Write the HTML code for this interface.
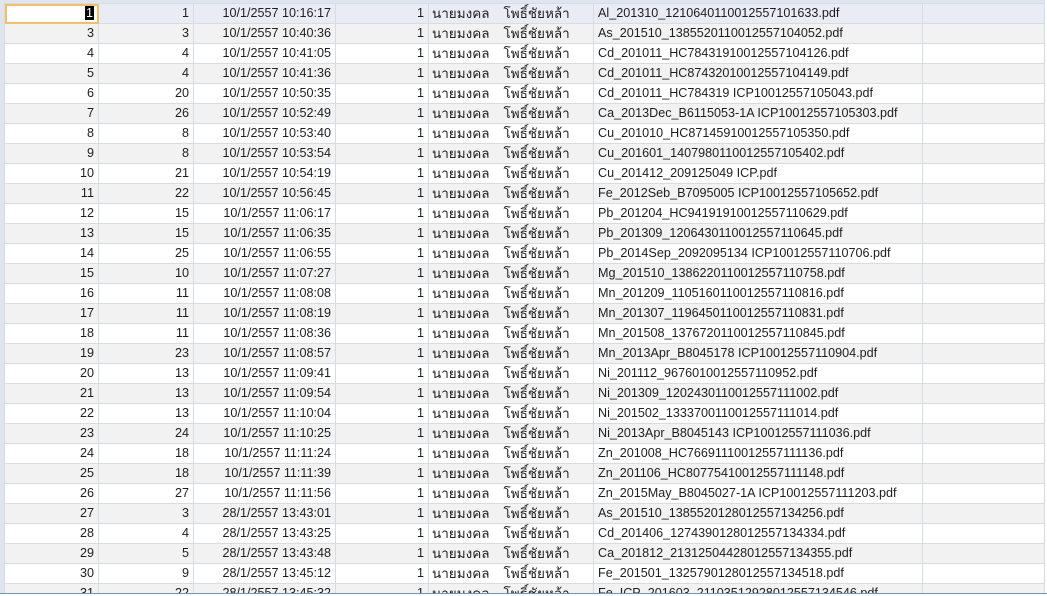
<!DOCTYPE html>
<html><head><meta charset="utf-8"><style>
html,body{margin:0;padding:0;background:#fff;width:1047px;height:596px;overflow:hidden}
.wrap{position:absolute;left:0;top:0;width:1047px;height:593px;background:#fff;overflow:hidden}
.top{position:absolute;left:0;top:0;width:1047px;height:3px;background:#dfe5ef}
.lft{position:absolute;left:0;top:0;width:4px;height:593px;background:#dfe5ef}
.bot{position:absolute;left:0;top:593px;width:1047px;height:1px;background:#6f93c8}
.rgt{position:absolute;left:1045px;top:0;width:2px;height:593px;background:#fff}
table{position:absolute;left:4px;top:3px;border-collapse:collapse;table-layout:fixed;font-family:"Liberation Sans","Noto Sans CJK SC",sans-serif;font-size:12.6px;color:#1e1e1e}
td{height:19px;padding:0 4px;border:1px solid #d5dce8;white-space:nowrap;overflow:hidden;line-height:19px}
td.r{text-align:right}
td.n{border-right:none;padding-left:3px;font-size:13.5px}
td.s{border-left:none;padding-left:3px;font-size:13.5px}
tr:nth-child(even) td{background:#f2f2f2}
tr.sel td{background:#e9ecf4}
tr.sel td.first{background:#fff;outline:2px solid #f5c063;outline-offset:-2px}
.hl{background:#000;color:#fff;padding:0 1px}
</style></head><body>
<div class="wrap">
<div class="top"></div><div class="lft"></div>
<table>
<colgroup><col style="width:94px"><col style="width:95px"><col style="width:142px"><col style="width:93px"><col style="width:72px"><col style="width:93px"><col style="width:329px"><col style="width:122px"></colgroup>
<tr class="sel"><td class="r first"><span class="hl">1</span></td><td class="r">1</td><td class="r">10/1/2557 10:16:17</td><td class="r">1</td><td class="n">นายมงคล</td><td class="s">โพธิ์ชัยหล้า</td><td>Al_201310_1210640110012557101633.pdf</td><td></td></tr>
<tr><td class="r">3</td><td class="r">3</td><td class="r">10/1/2557 10:40:36</td><td class="r">1</td><td class="n">นายมงคล</td><td class="s">โพธิ์ชัยหล้า</td><td>As_201510_1385520110012557104052.pdf</td><td></td></tr>
<tr><td class="r">4</td><td class="r">4</td><td class="r">10/1/2557 10:41:05</td><td class="r">1</td><td class="n">นายมงคล</td><td class="s">โพธิ์ชัยหล้า</td><td>Cd_201011_HC78431910012557104126.pdf</td><td></td></tr>
<tr><td class="r">5</td><td class="r">4</td><td class="r">10/1/2557 10:41:36</td><td class="r">1</td><td class="n">นายมงคล</td><td class="s">โพธิ์ชัยหล้า</td><td>Cd_201011_HC87432010012557104149.pdf</td><td></td></tr>
<tr><td class="r">6</td><td class="r">20</td><td class="r">10/1/2557 10:50:35</td><td class="r">1</td><td class="n">นายมงคล</td><td class="s">โพธิ์ชัยหล้า</td><td>Cd_201011_HC784319 ICP10012557105043.pdf</td><td></td></tr>
<tr><td class="r">7</td><td class="r">26</td><td class="r">10/1/2557 10:52:49</td><td class="r">1</td><td class="n">นายมงคล</td><td class="s">โพธิ์ชัยหล้า</td><td>Ca_2013Dec_B6115053-1A ICP10012557105303.pdf</td><td></td></tr>
<tr><td class="r">8</td><td class="r">8</td><td class="r">10/1/2557 10:53:40</td><td class="r">1</td><td class="n">นายมงคล</td><td class="s">โพธิ์ชัยหล้า</td><td>Cu_201010_HC87145910012557105350.pdf</td><td></td></tr>
<tr><td class="r">9</td><td class="r">8</td><td class="r">10/1/2557 10:53:54</td><td class="r">1</td><td class="n">นายมงคล</td><td class="s">โพธิ์ชัยหล้า</td><td>Cu_201601_1407980110012557105402.pdf</td><td></td></tr>
<tr><td class="r">10</td><td class="r">21</td><td class="r">10/1/2557 10:54:19</td><td class="r">1</td><td class="n">นายมงคล</td><td class="s">โพธิ์ชัยหล้า</td><td>Cu_201412_209125049 ICP.pdf</td><td></td></tr>
<tr><td class="r">11</td><td class="r">22</td><td class="r">10/1/2557 10:56:45</td><td class="r">1</td><td class="n">นายมงคล</td><td class="s">โพธิ์ชัยหล้า</td><td>Fe_2012Seb_B7095005 ICP10012557105652.pdf</td><td></td></tr>
<tr><td class="r">12</td><td class="r">15</td><td class="r">10/1/2557 11:06:17</td><td class="r">1</td><td class="n">นายมงคล</td><td class="s">โพธิ์ชัยหล้า</td><td>Pb_201204_HC94191910012557110629.pdf</td><td></td></tr>
<tr><td class="r">13</td><td class="r">15</td><td class="r">10/1/2557 11:06:35</td><td class="r">1</td><td class="n">นายมงคล</td><td class="s">โพธิ์ชัยหล้า</td><td>Pb_201309_1206430110012557110645.pdf</td><td></td></tr>
<tr><td class="r">14</td><td class="r">25</td><td class="r">10/1/2557 11:06:55</td><td class="r">1</td><td class="n">นายมงคล</td><td class="s">โพธิ์ชัยหล้า</td><td>Pb_2014Sep_2092095134 ICP10012557110706.pdf</td><td></td></tr>
<tr><td class="r">15</td><td class="r">10</td><td class="r">10/1/2557 11:07:27</td><td class="r">1</td><td class="n">นายมงคล</td><td class="s">โพธิ์ชัยหล้า</td><td>Mg_201510_1386220110012557110758.pdf</td><td></td></tr>
<tr><td class="r">16</td><td class="r">11</td><td class="r">10/1/2557 11:08:08</td><td class="r">1</td><td class="n">นายมงคล</td><td class="s">โพธิ์ชัยหล้า</td><td>Mn_201209_1105160110012557110816.pdf</td><td></td></tr>
<tr><td class="r">17</td><td class="r">11</td><td class="r">10/1/2557 11:08:19</td><td class="r">1</td><td class="n">นายมงคล</td><td class="s">โพธิ์ชัยหล้า</td><td>Mn_201307_1196450110012557110831.pdf</td><td></td></tr>
<tr><td class="r">18</td><td class="r">11</td><td class="r">10/1/2557 11:08:36</td><td class="r">1</td><td class="n">นายมงคล</td><td class="s">โพธิ์ชัยหล้า</td><td>Mn_201508_1376720110012557110845.pdf</td><td></td></tr>
<tr><td class="r">19</td><td class="r">23</td><td class="r">10/1/2557 11:08:57</td><td class="r">1</td><td class="n">นายมงคล</td><td class="s">โพธิ์ชัยหล้า</td><td>Mn_2013Apr_B8045178 ICP10012557110904.pdf</td><td></td></tr>
<tr><td class="r">20</td><td class="r">13</td><td class="r">10/1/2557 11:09:41</td><td class="r">1</td><td class="n">นายมงคล</td><td class="s">โพธิ์ชัยหล้า</td><td>Ni_201112_9676010012557110952.pdf</td><td></td></tr>
<tr><td class="r">21</td><td class="r">13</td><td class="r">10/1/2557 11:09:54</td><td class="r">1</td><td class="n">นายมงคล</td><td class="s">โพธิ์ชัยหล้า</td><td>Ni_201309_1202430110012557111002.pdf</td><td></td></tr>
<tr><td class="r">22</td><td class="r">13</td><td class="r">10/1/2557 11:10:04</td><td class="r">1</td><td class="n">นายมงคล</td><td class="s">โพธิ์ชัยหล้า</td><td>Ni_201502_1333700110012557111014.pdf</td><td></td></tr>
<tr><td class="r">23</td><td class="r">24</td><td class="r">10/1/2557 11:10:25</td><td class="r">1</td><td class="n">นายมงคล</td><td class="s">โพธิ์ชัยหล้า</td><td>Ni_2013Apr_B8045143 ICP10012557111036.pdf</td><td></td></tr>
<tr><td class="r">24</td><td class="r">18</td><td class="r">10/1/2557 11:11:24</td><td class="r">1</td><td class="n">นายมงคล</td><td class="s">โพธิ์ชัยหล้า</td><td>Zn_201008_HC76691110012557111136.pdf</td><td></td></tr>
<tr><td class="r">25</td><td class="r">18</td><td class="r">10/1/2557 11:11:39</td><td class="r">1</td><td class="n">นายมงคล</td><td class="s">โพธิ์ชัยหล้า</td><td>Zn_201106_HC80775410012557111148.pdf</td><td></td></tr>
<tr><td class="r">26</td><td class="r">27</td><td class="r">10/1/2557 11:11:56</td><td class="r">1</td><td class="n">นายมงคล</td><td class="s">โพธิ์ชัยหล้า</td><td>Zn_2015May_B8045027-1A ICP10012557111203.pdf</td><td></td></tr>
<tr><td class="r">27</td><td class="r">3</td><td class="r">28/1/2557 13:43:01</td><td class="r">1</td><td class="n">นายมงคล</td><td class="s">โพธิ์ชัยหล้า</td><td>As_201510_1385520128012557134256.pdf</td><td></td></tr>
<tr><td class="r">28</td><td class="r">4</td><td class="r">28/1/2557 13:43:25</td><td class="r">1</td><td class="n">นายมงคล</td><td class="s">โพธิ์ชัยหล้า</td><td>Cd_201406_1274390128012557134334.pdf</td><td></td></tr>
<tr><td class="r">29</td><td class="r">5</td><td class="r">28/1/2557 13:43:48</td><td class="r">1</td><td class="n">นายมงคล</td><td class="s">โพธิ์ชัยหล้า</td><td>Ca_201812_21312504428012557134355.pdf</td><td></td></tr>
<tr><td class="r">30</td><td class="r">9</td><td class="r">28/1/2557 13:45:12</td><td class="r">1</td><td class="n">นายมงคล</td><td class="s">โพธิ์ชัยหล้า</td><td>Fe_201501_1325790128012557134518.pdf</td><td></td></tr>
<tr><td class="r">31</td><td class="r">22</td><td class="r">28/1/2557 13:45:32</td><td class="r">1</td><td class="n">นายมงคล</td><td class="s">โพธิ์ชัยหล้า</td><td>Fe_ICP_201603_21103512928012557134546.pdf</td><td></td></tr>
</table>
<div class="rgt"></div>
</div>
<div class="bot"></div>
</body></html>
